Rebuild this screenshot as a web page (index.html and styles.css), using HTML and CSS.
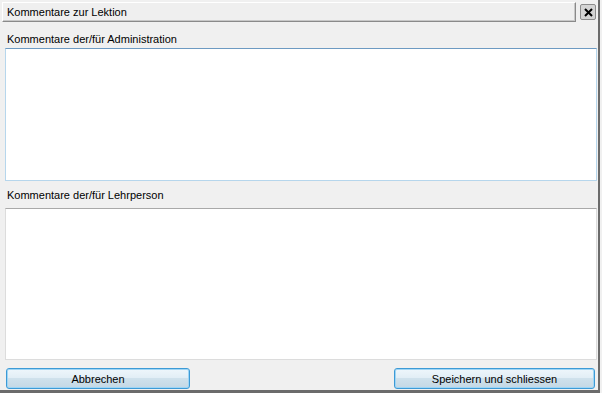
FILE: index.html
```html
<!DOCTYPE html>
<html lang="de">
<head>
    <meta charset="UTF-8">
    <title>Kommentare zur Lektion</title>
    <link rel="stylesheet" href="styles.css">
</head>
<body>
    <div class="window">
        <div class="titlerow">
            <div class="title">Kommentare zur Lektion</div>
            <button class="close" title="Schliessen">
                <svg width="9" height="9" viewBox="0 0 9 9"><path d="M1 1L8 8M8 1L1 8" stroke="#000" stroke-width="2"/></svg>
            </button>
        </div>

        <div class="body">
            <label class="caption caption-first" for="admin">Kommentare der/für Administration</label>
            <textarea id="admin" class="note note-active"></textarea>

            <label class="caption" for="teacher">Kommentare der/für Lehrperson</label>
            <textarea id="teacher" class="note"></textarea>

            <div class="actions">
                <button class="btn btn-cancel">Abbrechen</button>
                <button class="btn btn-save">Speichern und schliessen</button>
            </div>
        </div>
    </div>
</body>
</html>
```

FILE: styles.css
```css
html, body {
    margin: 0;
    padding: 0;
}

body {
    background: #f0f0f0;
    font-family: "Liberation Sans", Arial, sans-serif;
    font-size: 11px;
    color: #000;
}

.window {
    width: 598px;
    height: 390px;
    border-right: 2px solid #6b6b6b;
    border-bottom: 3px solid #6b6b6b;
    box-sizing: content-box;
    display: flex;
    flex-direction: column;
}

/* Title row */
.titlerow {
    display: flex;
    align-items: center;
    padding: 2px 2px 0 2px;
    gap: 4px;
}

.title {
    flex: 1;
    height: 18px;
    line-height: 18px;
    padding-left: 4px;
    background: #efefef;
    border-top: 1px solid #fff;
    border-left: 1px solid #fff;
    border-right: 1px solid #8a8a8a;
    border-bottom: 1px solid #8a8a8a;
    box-shadow: inset -1px -1px 0 #c8c8c8;
}

.close {
    width: 16px;
    height: 16px;
    margin-right: 0;
    padding: 0;
    display: flex;
    align-items: center;
    justify-content: center;
    background: #d4d4d4;
    border: 1px solid #8c8c8c;
    border-radius: 2px;
}

/* Content */
.body {
    flex: 1;
    display: flex;
    flex-direction: column;
    padding: 0 2px 0 5px;
}

.caption {
    display: block;
    margin-top: 5px;
    margin-bottom: 4px;
    height: 18px;
    line-height: 18px;
    padding-left: 2px;
}

.caption-first {
    margin-top: 8px;
    margin-bottom: 0;
}

.note {
    display: block;
    width: 592px;
    margin: 0;
    resize: none;
    background: #fff;
    border: 1px solid #dcdcdc;
    border-top-color: #a9a9a9;
    box-sizing: border-box;
    font-family: inherit;
    font-size: 11px;
}

#admin {
    height: 133px;
}

#teacher {
    height: 152px;
}

.note-active {
    border-color: #b6d6ec;
    border-top-color: #6d9ac2;
}

/* Buttons */
.actions {
    display: flex;
    justify-content: space-between;
    margin-top: 8px;
    padding-right: 1px;
}

.btn {
    height: 21px;
    padding: 0;
    font-family: inherit;
    font-size: 11px;
    color: #000;
    border: 1px solid #3c9ad6;
    border-radius: 3px;
    background: linear-gradient(#eef6fb 0%, #e2eef6 45%, #cfe1ec 50%, #c4d8e5 100%);
    box-shadow: inset 0 0 0 1px #9fd5f5;
}

.btn-cancel {
    width: 184px;
    margin-left: 1px;
}

.btn-save {
    width: 201px;
}
```
